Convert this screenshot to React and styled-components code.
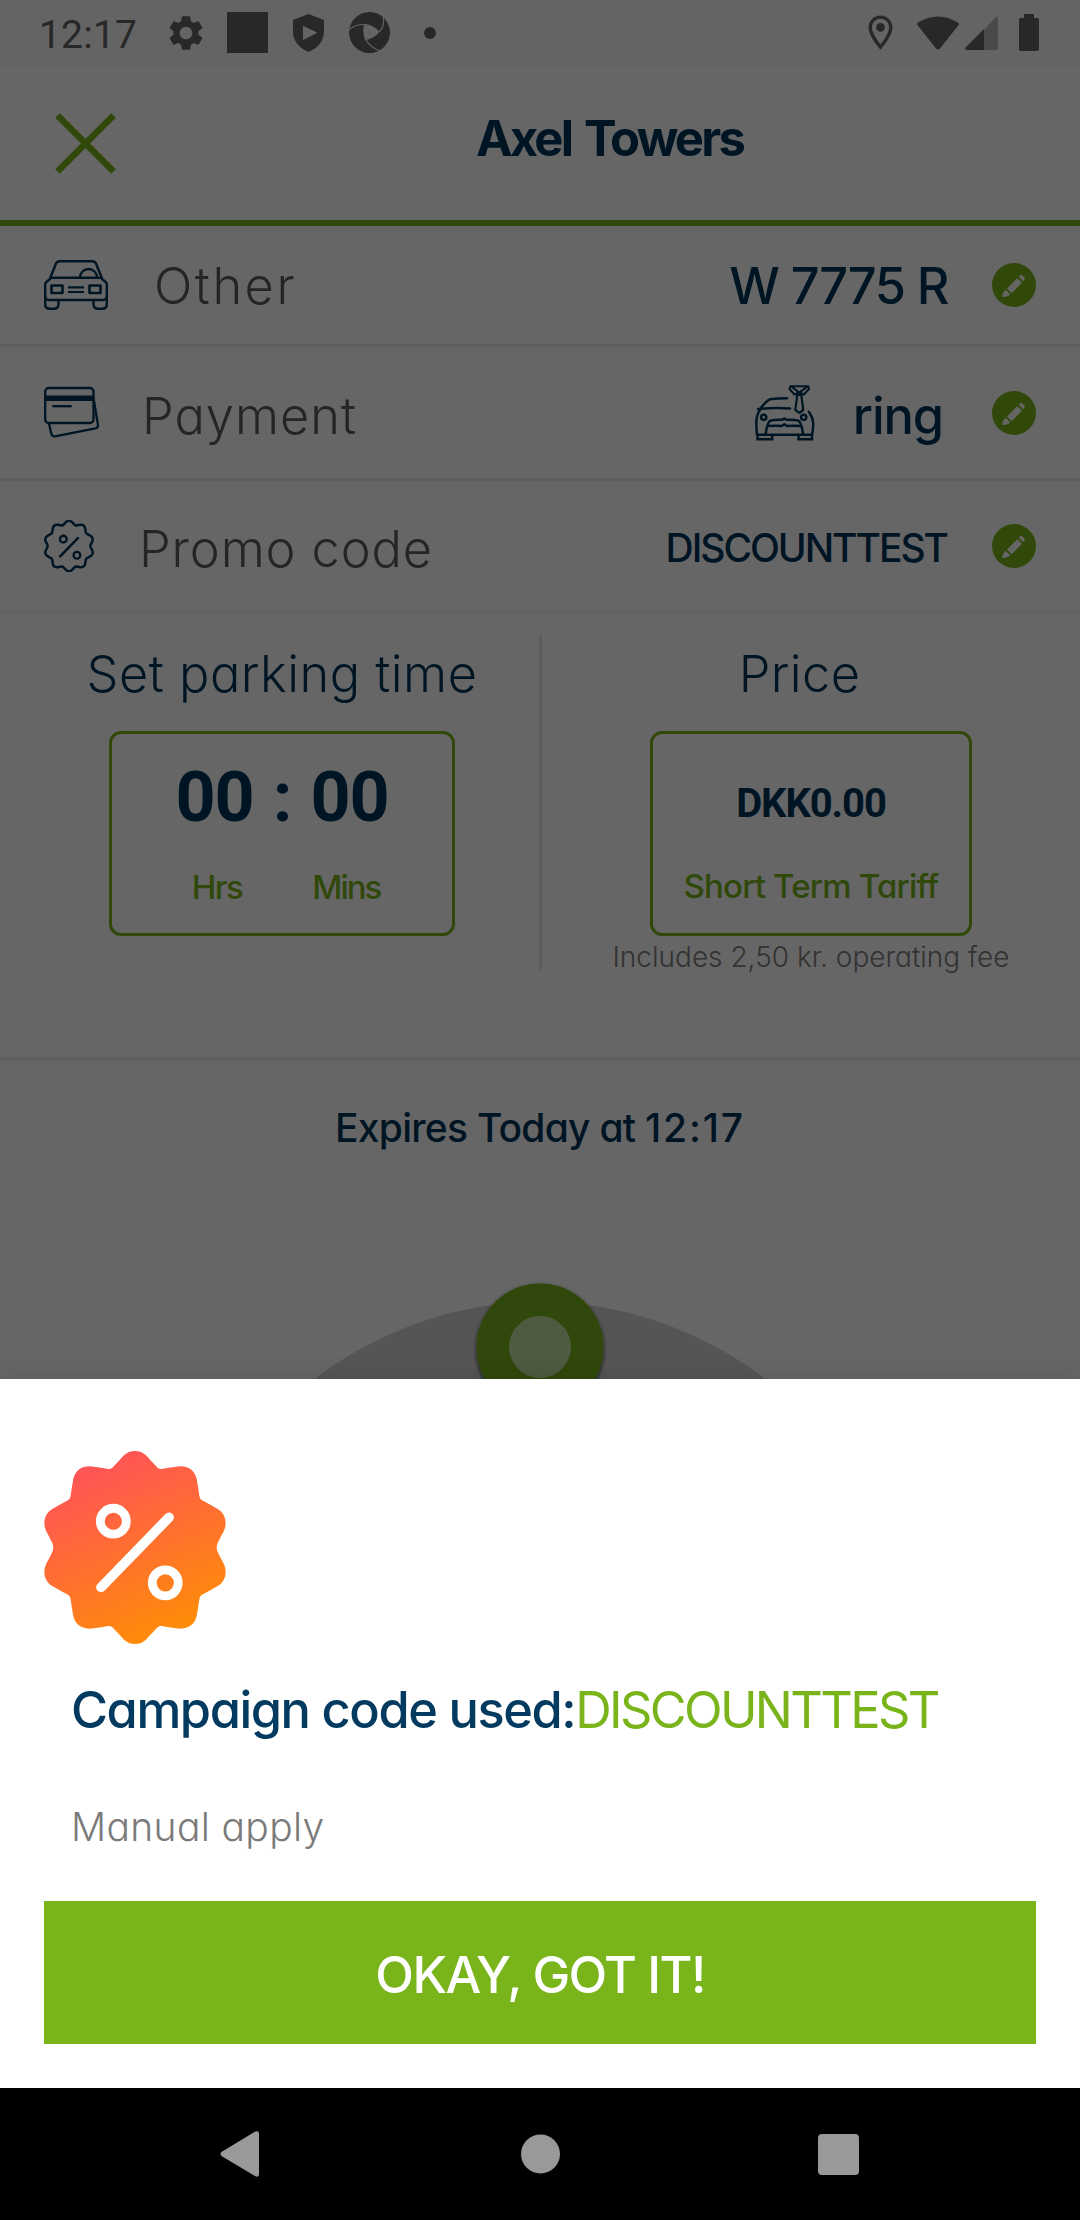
import React from 'react';
import styled, { createGlobalStyle } from 'styled-components';
import { MdSettings, MdOutlineLocationOn } from 'react-icons/md';

const green = '#78b41a';
const navy = '#00365b';
const line = '#ebebeb';
const ink = '#646464';
const sans = "Inter, 'Noto Sans', 'Liberation Sans', sans-serif";
const roboto = "Roboto, 'Liberation Sans', sans-serif";

const GlobalStyle = createGlobalStyle`
  * { box-sizing: border-box; }
  body { margin: 0; background: #fff; }
  svg { display: block; flex: none; }
`;

const Screen = styled.div`
  width: 1080px;
  height: 2220px;
  display: flex;
  flex-direction: column;
  overflow: hidden;
  font-family: ${sans};
  font-feature-settings: 'cv11';
`;

const AppArea = styled.main`
  position: relative;
  height: 2088px;
  display: flex;
  flex-direction: column;
  overflow: hidden;
  background: #fff;
`;

const Scrim = styled.div`
  position: absolute;
  inset: 0;
  background: rgba(0, 0, 0, 0.6);
`;

const Text = styled.span`
  font-size: ${(p) => p.$size}px;
  font-weight: ${(p) => p.$weight || 340};
  letter-spacing: ${(p) => p.$track || 0}px;
  line-height: ${(p) => p.$line || 60}px;
  color: ${(p) => p.$color || navy};
  white-space: nowrap;
`;

/* Status bar */
const StatusBar = styled.header`
  height: 66px;
  padding: 0 41px 0 39px;
  display: flex;
  align-items: center;
  background: #fafafa;
  color: ${ink};
  border-bottom: 1px solid #f6f6f6;
`;
const Clock = styled.span`
  width: 98px;
  padding-top: 4px;
  font: 400 39px/46px ${roboto};
  letter-spacing: 0.2px;
  white-space: nowrap;
  color: ${ink};
`;
const Slot = styled.span`
  display: flex;
  margin-left: ${(p) => p.$gap}px;
`;
const SquareGlyph = styled.span`
  width: 41px;
  height: 41px;
  background: ${ink};
`;
const DotGlyph = styled.span`
  width: 12px;
  height: 12px;
  border-radius: 50%;
  background: ${ink};
`;
const Spacer = styled.span`
  flex: 1;
`;

/* Title bar */
const TitleBar = styled.div`
  height: 160px;
  display: flex;
  align-items: center;
  border-bottom: 6px solid ${green};
`;
const CloseButton = styled.button`
  width: 139px;
  height: 100%;
  padding: 0 0 0 53px;
  border: 0;
  background: none;
`;
const Title = styled.h1`
  flex: 1;
  margin: 0;
  padding-bottom: 8px;
  text-align: center;
  font-size: 49px;
  font-weight: 650;
  letter-spacing: -2.8px;
  word-spacing: 4px;
  line-height: 60px;
  color: ${navy};
`;

/* Detail rows */
const Row = styled.section`
  height: ${(p) => p.$height}px;
  padding: 0 44px;
  display: flex;
  align-items: center;
  border-bottom: ${(p) => p.$rule}px solid ${line};
`;
const Label = styled(Text)`
  margin-left: ${(p) => p.$gap}px;
  padding-top: ${(p) => p.$drop || 0}px;
  flex: 1;
`;
const Value = styled(Text)`
  margin-left: ${(p) => p.$start || 0}px;
  margin-right: ${(p) => p.$end}px;
  padding-top: ${(p) => p.$drop || 0}px;
`;

/* Time and price */
const Summary = styled.section`
  height: 448px;
  display: flex;
  border-bottom: 3px solid ${line};
`;
const Column = styled.div`
  width: ${(p) => p.$width}px;
  padding: 32px 0 0 ${(p) => p.$shift}px;
  display: flex;
  flex-direction: column;
  align-items: center;
`;
const PriceTitle = styled(Text)`
  margin-right: 23px;
`;
const Divider = styled.div`
  width: 3px;
  height: 336px;
  margin-top: 22px;
  background: ${line};
`;
const Card = styled.div`
  width: ${(p) => p.$width}px;
  height: 205px;
  margin-top: 27px;
  padding-top: ${(p) => p.$top}px;
  display: flex;
  flex-direction: column;
  align-items: center;
  border: 3px solid ${green};
  border-radius: 12px;
`;
const Digits = styled.div`
  display: flex;
  font: 700 ${(p) => p.$size}px/70px ${roboto};
  letter-spacing: -1.1px;
  color: ${navy};
`;
const Colon = styled.span`
  width: 57px;
  text-align: center;
`;
const Units = styled.div`
  display: flex;
  gap: ${(p) => p.$gap || 0}px;
  padding-left: ${(p) => p.$shift || 0}px;
  margin-top: ${(p) => p.$top}px;
`;
const Fee = styled(Text)`
  padding-top: 1px;
`;

/* Dial */
const Expiry = styled.div`
  height: 91px;
  padding-top: 43px;
  text-align: center;
`;
const ExpiryTime = styled.span`
  letter-spacing: 1.9px;
`;

/* Bottom sheet */
const Sheet = styled.section`
  position: absolute;
  left: 0;
  right: 0;
  bottom: 0;
  height: 709px;
  padding: 72px 44px 44px;
  display: flex;
  flex-direction: column;
  background: #fff;
  box-shadow: 0 0 24px rgba(0, 0, 0, 0.14);
`;
const SheetTitle = styled.div`
  margin: 36px 0 0 27px;
  display: flex;
`;
const SheetNote = styled.div`
  margin: 62px 0 0 27px;
`;
const Confirm = styled.button`
  height: 143px;
  margin-top: auto;
  padding: 4px 0 0;
  border: 0;
  background: ${green};
  font: 500 50.5px/60px ${sans};
  font-feature-settings: 'cv11';
  letter-spacing: -1.6px;
  color: #fff;
`;

/* Navigation bar */
const NavBar = styled.nav`
  height: 132px;
  padding: 0 221px 0 220px;
  display: flex;
  align-items: center;
  justify-content: space-between;
  background: #000;
`;
const NavSlot = styled.span`
  width: ${(p) => p.$width}px;
  display: flex;
  justify-content: ${(p) => p.$align || 'center'};
`;

/* One quarter of the scalloped outline, mirrored around the centre (91, 96.6). */
const quarter = [
  [91, 0], [95.5, 0], [99, 1.5], [102, 4.3],
  [105, 7.5], [109, 12], [112, 15],
  [114.5, 18], [115.5, 18.3], [119, 17.8],
  [124, 17], [129, 16], [134, 15.5],
  [145, 14.5], [152, 20], [153.3, 31],
  [154, 36], [154.8, 40], [155.3, 44],
  [156, 48], [156.5, 48.5], [160, 50.3],
  [164, 52.5], [168, 54.5], [172, 57],
  [181, 61], [184, 71], [180, 80],
  [178, 84], [176, 87], [174.3, 91],
  [172.8, 94], [172.8, 95.5], [172.8, 96.6],
];
const flipY = quarter.map(([x, y]) => [x, 193.2 - y]).reverse();
const rightHalf = [...quarter, ...flipY.slice(1)];
const leftHalf = rightHalf.map(([x, y]) => [182 - x, y]).reverse();
const outline = [...rightHalf, ...leftHalf.slice(1)];
const sealPath = `M${outline[0].join(' ')}C${outline.slice(1).map((p) => p.join(' ')).join(' ')}Z`;

const PercentMark = ({ color, width }) => (
  <g fill="none" stroke={color} strokeWidth={width} strokeLinecap="round">
    <circle cx="69.3" cy="70.3" r="13" />
    <circle cx="121.3" cy="132" r="13" />
    <path d="M57 136.5L125 66.5" strokeWidth={width + 1} />
  </g>
);

const SealIcon = () => (
  <svg width="50" height="52" viewBox="-4 -3 190 199.2">
    <path d={sealPath} fill="none" stroke={navy} strokeWidth="9.5" strokeLinejoin="round" />
    <PercentMark color={navy} width={9} />
  </svg>
);

const SealBadge = () => (
  <svg width="182" height="193" viewBox="0 0 182 193.2">
    <defs>
      <linearGradient id="seal" x1="0.3" y1="0.08" x2="0.68" y2="0.95">
        <stop offset="0" stopColor="#ff5555" />
        <stop offset="1" stopColor="#ff8c08" />
      </linearGradient>
    </defs>
    <path d={sealPath} fill="url(#seal)" />
    <PercentMark color="#fff" width={8.8} />
  </svg>
);

const CarIcon = () => (
  <svg width="64" height="50" viewBox="0 0 64 50" fill="none" stroke={navy} strokeWidth="2.4" strokeLinejoin="round">
    <path d="M6 18.5L12 3.5Q13 1.2 16 1.2H48Q51 1.2 52 3.5L58 18.5" />
    <path d="M7.5 17.7H56.5L61.6 22Q62.8 23 62.8 24.5V36Q62.8 40 59 40H5Q1.2 40 1.2 36V24.5Q1.2 23 2.4 22Z" />
    <path d="M36 17.5A8.5 8.5 0 0 1 53 17.5" />
    <path d="M7.5 25.5H18.5V33H7.5ZM45.5 25.5H56.5V33H45.5Z" strokeWidth="2.6" />
    <path d="M24 27.3H40M24 32H40" strokeWidth="2.2" />
    <path d="M1.2 36V44Q1.2 48.8 6 48.8H9.5Q14.5 48.8 14.5 44V40M62.8 36V44Q62.8 48.8 58 48.8H54.5Q49.5 48.8 49.5 44V40" />
  </svg>
);

const CardsIcon = () => (
  <svg width="56" height="54" viewBox="0 0 56 54" fill="none" stroke={navy} strokeWidth="2.3" strokeLinejoin="round">
    <rect x="1.2" y="2" width="48.3" height="35" rx="3.5" />
    <path d="M1 12.2H49.5" strokeWidth="5.4" />
    <path d="M8.3 20.2H27.6" strokeWidth="2.4" />
    <path d="M49.5 12L54 39Q54.5 41.7 51.5 42.4L11 50.3Q8 50.7 7.3 47.6L4.8 37" />
  </svg>
);

const ValetCarIcon = () => (
  <svg width="60" height="56" viewBox="0 0 60 56" fill="none" stroke={navy} strokeWidth="2.5" strokeLinecap="round" strokeLinejoin="round">
    <path d="M35.5 1.2H53.2L54 4L48.8 9.6L44.3 7L39.6 9.6L34.5 4ZM37 2L44.3 7.6L51.8 2" strokeWidth="2.1" />
    <path d="M42.3 9.8L40.3 25L44.3 27.8L48.3 25L46.3 9.8Z" strokeWidth="2.2" />
    <path d="M32 13.3Q22 13.3 14.8 14.3Q11.5 15.5 5.5 23.5M3 24Q16 22.6 35 23.4" />
    <path d="M5.5 24Q1.4 30 1.3 37Q1.3 44 2 49.5M53.8 26.8Q58.5 33 58.2 41Q57.8 46 57 49.5" />
    <circle cx="8.7" cy="32.3" r="2.6" />
    <circle cx="48.7" cy="32.3" r="2.6" />
    <path d="M10.7 49Q12 38 15.3 35.6Q21 34.3 27 34.8L29.3 33.5L31.6 34.8Q38 34.3 43.3 35.6Q46.7 38 48 49M13.5 41Q20 40.3 26.5 41L29.3 39.3L32 41Q38.5 40.3 45 41" />
    <path d="M2.5 49.7H57V54.2H43.5V50M2.5 49.7V54.2H17.2V50" strokeLinejoin="miter" strokeLinecap="square" />
  </svg>
);

const EditIcon = () => (
  <svg width="44" height="44" viewBox="0 0 44 44">
    <circle cx="22" cy="22" r="22" fill={green} />
    <g fill="#fff">
      <path d="M25.3 15.2L29.9 19.8L19.6 30.2L15 25.6Z" />
      <path d="M13.6 26.8L18.4 31.4Q14.5 34.2 10.2 34Q10.2 30 13.6 26.8Z" />
      <path d="M26.7 13.8L28.6 11.9Q29.3 11.3 30 11.9L32.6 14.7Q33.2 15.4 32.6 16.2L31 18.2Z" />
    </g>
  </svg>
);

const CloseIcon = () => (
  <svg width="66" height="66" viewBox="0 0 66 66">
    <path d="M4.5 5.5L60.5 61.5M60.5 5.5L4.5 61.5" stroke={green} strokeWidth="6.6" />
  </svg>
);

const ShieldIcon = () => (
  <svg width="31" height="38" viewBox="0 0 31 38">
    <path fillRule="evenodd" fill={ink} d="M15.5 0L31 6V17C31 27 25 34 15.5 38C6 34 0 27 0 17V6ZM10 11.8V26L24.5 18.8Z" />
  </svg>
);

const SwirlIcon = () => (
  <svg width="41" height="41" viewBox="0 0 41 41">
    <circle cx="20.5" cy="20.5" r="20.5" fill={ink} />
    <path fill="#fafafa" d="M15 13C22 12.6 27 15.5 30.5 19.8C27 24.5 22 27 16.5 28.2C14 23 14 17 15 13Z" />
    <g fill="none" stroke="#fafafa" strokeWidth="1.1">
      <path d="M0 18C6 12 15 11.5 22 14" />
      <path d="M34 2.5C35.5 10 34.5 16 30.3 20" />
      <path d="M15.8 26C19 32 25 37.5 32 39" />
    </g>
  </svg>
);

const WifiIcon = () => (
  <svg width="42" height="34" viewBox="0 0 42 34">
    <path fill={ink} d="M1 6.5Q21-5.5 41 6.5Q42.5 7.7 41.4 9.2L23 32.5Q21 34.5 19 32.5L0.6 9.2Q-.5 7.7 1 6.5Z" />
  </svg>
);

const SignalIcon = () => (
  <svg width="33" height="34" viewBox="0 0 33 34">
    <path fill="#b9b9b9" d="M19 14L31 .8Q33-.6 33 2V32.5Q33 34 31.5 34H19Z" />
    <path fill={ink} d="M19 13V34H1.5Q-.8 33.4 .6 31.5Z" />
  </svg>
);

const BatteryIcon = () => (
  <svg width="20" height="37" viewBox="0 0 20 37">
    <path fill={ink} d="M5 0H15V4H18Q20 4 20 6V35Q20 37 18 37H2Q0 37 0 35V6Q0 4 2 4H5Z" />
  </svg>
);

const Dial = () => (
  <svg width="1080" height="937" viewBox="0 0 1080 937">
    <defs>
      <filter id="knobShadow" x="-20%" y="-20%" width="140%" height="140%">
        <feDropShadow dx="0" dy="2" stdDeviation="2.2" floodColor="#000" floodOpacity="0.75" />
      </filter>
    </defs>
    <circle cx="540" cy="518" r="367" fill="#d4d4d4" />
    <circle cx="540" cy="196" r="63.5" fill={green} filter="url(#knobShadow)" />
    <circle cx="540" cy="196" r="31" fill="#c6e3a0" />
  </svg>
);

export default function App() {
  return (
    <>
      <GlobalStyle />
      <Screen>
        <AppArea>
          <StatusBar>
            <Clock>12:17</Clock>
            <Slot $gap={28}><MdSettings size={42} /></Slot>
            <Slot $gap={20}><SquareGlyph /></Slot>
            <Slot $gap={25}><ShieldIcon /></Slot>
            <Slot $gap={25}><SwirlIcon /></Slot>
            <Slot $gap={34}><DotGlyph /></Slot>
            <Spacer />
            <Slot $gap={0}><MdOutlineLocationOn size={41} /></Slot>
            <Slot $gap={16}><WifiIcon /></Slot>
            <Slot $gap={6}><SignalIcon /></Slot>
            <Slot $gap={21}><BatteryIcon /></Slot>
          </StatusBar>

          <TitleBar>
            <CloseButton aria-label="Close"><CloseIcon /></CloseButton>
            <Title>Axel Towers</Title>
          </TitleBar>

          <Row $height={121} $rule={3}>
            <CarIcon />
            <Label $gap={46} $drop={1} $size={50.5} $track={2.5} $color="#5c5c5c">Other</Label>
            <Value $end={44} $drop={1} $size={50.5} $weight={500} $track={-1.36}>W 7775 R</Value>
            <EditIcon />
          </Row>
          <Row $height={134} $rule={3}>
            <CardsIcon />
            <Label $gap={42} $drop={7} $size={50.5} $track={1} $color="#5c5c5c">Payment</Label>
            <ValetCarIcon />
            <Value $start={38} $end={49} $drop={7} $size={50.5} $weight={500} $track={-1.1}>ring</Value>
            <EditIcon />
          </Row>
          <Row $height={131} $rule={1}>
            <SealIcon />
            <Label $gap={45} $drop={5} $size={50.5} $track={0.9} $color="#5c5c5c">Promo code</Label>
            <Value $end={45} $drop={4} $size={39} $weight={500} $track={-2.04}>DISCOUNTTEST</Value>
            <EditIcon />
          </Row>

          <Summary>
            <Column $width={539} $shift={25}>
              <Text $size={50.5} $track={0.5}>Set parking time</Text>
              <Card $width={346} $top={28}>
                <Digits $size={70}>
                  <span>00</span>
                  <Colon>:</Colon>
                  <span>00</span>
                </Digits>
                <Units $top={35} $gap={70} $shift={8}>
                  <Text $size={33} $weight={500} $track={-1.5} $line={40} $color={green}>Hrs</Text>
                  <Text $size={33} $weight={500} $track={-2} $line={40} $color={green}>Mins</Text>
                </Units>
              </Card>
            </Column>
            <Divider />
            <Column $width={538} $shift={0}>
              <PriceTitle $size={50.5} $track={0.4}>Price</PriceTitle>
              <Card $width={322} $top={35}>
                <Digits $size={40}>DKK0.00</Digits>
                <Units $top={27}>
                  <Text $size={33} $weight={500} $track={-0.8} $line={40} $color={green}>Short Term Tariff</Text>
                </Units>
              </Card>
              <Fee $size={28} $track={0} $line={41} $color="#808080">Includes 2,50 kr. operating fee</Fee>
            </Column>
          </Summary>

          <Expiry>
            <Text $size={39} $weight={500} $track={-0.75} $line={50}>
              Expires Today at <ExpiryTime>12:17</ExpiryTime>
            </Text>
          </Expiry>
          <Dial />

          <Scrim />

          <Sheet>
            <SealBadge />
            <SheetTitle>
              <Text $size={50.5} $weight={500} $track={-1.42} $color="#023a60">Campaign code used:</Text>
              <Text $size={50.5} $weight={420} $track={-2.64} $color={green}>DISCOUNTTEST</Text>
            </SheetTitle>
            <SheetNote>
              <Text $size={39} $track={0.35} $line={50} $color="#7a7a7a">Manual apply</Text>
            </SheetNote>
            <Confirm>OKAY, GOT IT!</Confirm>
          </Sheet>
        </AppArea>

        <NavBar>
          <NavSlot $width={41} $align="flex-start">
            <svg width="39" height="46" viewBox="0 0 39 46">
              <path d="M34 1.2Q39-1.5 39 3V43Q39 47.5 34.5 44.8L1.8 25.2Q-.8 23 1.8 20.8Z" fill="#999" />
            </svg>
          </NavSlot>
          <NavSlot $width={40}>
            <svg width="40" height="40" viewBox="0 0 40 40">
              <circle cx="20.5" cy="20" r="19.5" fill="#999" />
            </svg>
          </NavSlot>
          <NavSlot $width={41}>
            <svg width="41" height="41" viewBox="0 0 41 41">
              <rect width="41" height="41" rx="4" fill="#999" />
            </svg>
          </NavSlot>
        </NavBar>
      </Screen>
    </>
  );
}
